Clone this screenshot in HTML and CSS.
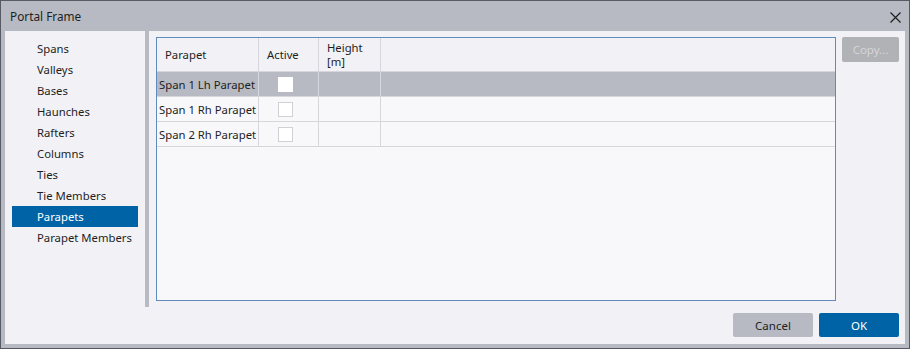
FILE: index.html
```html
<!DOCTYPE html>
<html lang="en">
<head>
    <meta charset="UTF-8">
    <title>Portal Frame</title>
    <link rel="stylesheet" href="styles.css">
</head>
<body>
    <div class="window">
        <div class="titlebar">
            <span class="title">Portal Frame</span>
            <svg class="close" width="11" height="11" viewBox="0 0 11 11">
                <path d="M0.5 0.5 L10.5 10.5 M10.5 0.5 L0.5 10.5" stroke="#1e1e1e" stroke-width="1.2"/>
            </svg>
        </div>
        <div class="content">
            <div class="main">
                <ul class="nav">
                    <li>Spans</li>
                    <li>Valleys</li>
                    <li>Bases</li>
                    <li>Haunches</li>
                    <li>Rafters</li>
                    <li>Columns</li>
                    <li>Ties</li>
                    <li>Tie Members</li>
                    <li class="selected">Parapets</li>
                    <li>Parapet Members</li>
                </ul>
                <div class="splitter"></div>
                <div class="panel">
                    <div class="grid">
                        <table>
                            <thead>
                                <tr>
                                    <th class="col-name">Parapet</th>
                                    <th class="col-active">Active</th>
                                    <th class="col-height">Height<br>[m]</th>
                                    <th></th>
                                </tr>
                            </thead>
                            <tbody>
                                <tr class="current">
                                    <td>Span 1 Lh Parapet</td>
                                    <td class="check"><span class="box"></span></td>
                                    <td></td>
                                    <td></td>
                                </tr>
                                <tr>
                                    <td>Span 1 Rh Parapet</td>
                                    <td class="check"><span class="box"></span></td>
                                    <td></td>
                                    <td></td>
                                </tr>
                                <tr>
                                    <td>Span 2 Rh Parapet</td>
                                    <td class="check"><span class="box"></span></td>
                                    <td></td>
                                    <td></td>
                                </tr>
                            </tbody>
                        </table>
                    </div>
                    <button class="btn btn-copy" disabled>Copy...</button>
                </div>
            </div>
            <div class="footer">
                <button class="btn btn-cancel">Cancel</button>
                <button class="btn btn-ok">OK</button>
            </div>
        </div>
    </div>
</body>
</html>
```

FILE: styles.css
```css
body {
    margin: 0;
    font-family: "Noto Sans", "Open Sans", sans-serif;
    font-size: 11.3px;
    color: #1e1e1e;
}
.window {
    width: 910px;
    height: 349px;
    box-sizing: border-box;
    border: 1px solid #555a64;
    background-color: #b7bac2;
    display: flex;
    flex-direction: column;
}
.titlebar {
    height: 30px;
    display: flex;
    align-items: center;
    justify-content: space-between;
    padding: 0 8px 0 9px;
}
.title {
    font-size: 11.8px;
}
.close {
    margin-top: 2px;
}
.content {
    flex: 1;
    margin: 0 4px 4px 4px;
    background-color: #f2f2f6;
    display: flex;
    flex-direction: column;
}
.main {
    height: 276px;
    display: flex;
}
.nav {
    list-style: none;
    margin: 0;
    padding: 7px 7px 0 7px;
    width: 126px;
}
.nav li {
    height: 21px;
    line-height: 21px;
    padding-left: 25px;
}
.nav li.selected {
    background-color: #0063a6;
    color: white;
}
.splitter {
    width: 4px;
    background-color: #b7bac2;
}
.panel {
    flex: 1;
    display: flex;
    gap: 6px;
    padding: 6px 6px 6px 7px;
}
.grid {
    flex: 1;
    border: 1px solid #5e8dbd;
    background-color: #f8f8fa;
}
table {
    width: 100%;
    border-collapse: collapse;
    table-layout: fixed;
}
th {
    height: 33px;
    background-color: #f2f2f6;
    font-weight: normal;
    text-align: left;
    padding: 0 0 0 8px;
    line-height: 14px;
    border-right: 1px solid #d6d6dc;
    border-bottom: 1px solid #d6d6dc;
}
th:last-child {
    border-right: none;
}
.col-name { width: 93px; }
.col-active { width: 51px; }
.col-height { width: 53px; }
td {
    height: 24px;
    padding: 0 0 0 2px;
    border-right: 1px solid #d6d6dc;
    border-bottom: 1px solid #d6d6dc;
    white-space: nowrap;
    overflow: hidden;
}
td:last-child {
    border-right: none;
}
tr.current td {
    background-color: #b7bac2;
}
.check {
    text-align: center;
    padding: 0 6px 0 0;
}
.box {
    display: inline-block;
    width: 13px;
    height: 13px;
    background-color: white;
    border: 1px solid #d0d0d6;
    vertical-align: middle;
}
tr.current .box {
    border-color: #ffffff;
}
.btn {
    font-family: "Noto Sans", "Open Sans", sans-serif;
    font-size: 11.5px;
    border: none;
    border-radius: 2px;
    padding: 0;
}
.btn-copy {
    width: 57px;
    height: 25px;
    background-color: #b1b2b6;
    color: #d4d5da;
}
.footer {
    display: flex;
    justify-content: flex-end;
    gap: 6px;
    padding: 6px 6px 0 0;
}
.btn-cancel,
.btn-ok {
    width: 80px;
    height: 24px;
}
.btn-cancel {
    background-color: #b7bac2;
    color: #1e1e1e;
}
.btn-ok {
    background-color: #0063a6;
    color: white;
}
```
